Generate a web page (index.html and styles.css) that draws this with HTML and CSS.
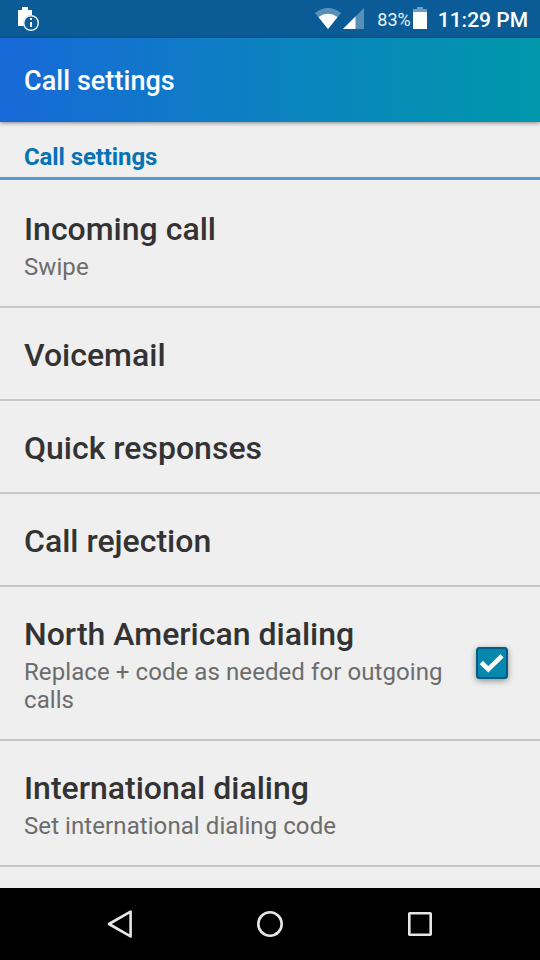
FILE: index.html
```
<!DOCTYPE html>
<html lang="en">
<head>
    <meta charset="UTF-8">
    <title>Call settings</title>
    <link rel="stylesheet" href="styles.css">
</head>
<body>

    <div class="status-bar">
        <svg class="notification" width="22" height="26" viewBox="0 0 22 26">
            <path d="M0 3h4V0h6v3h4v5a8 8 0 0 0-8 11H0z" fill="#fff"/>
            <circle cx="13" cy="16" r="7.3" fill="#0c5c98" stroke="#e8f1f7" stroke-width="1.5"/>
            <path d="M12 11h2v2h-2zM12 15h2v5h-2z" fill="#fff"/>
        </svg>
        <div class="status-icons">
            <svg class="wifi" width="26" height="22" viewBox="0 0 26 22">
                <path d="M0 5Q13-5 26 5L13 21z" fill="#5990b8"/>
                <path d="M3.4 9Q13 2.6 22.6 9L13 21z" fill="#fff"/>
            </svg>
            <svg class="signal" width="21" height="21" viewBox="0 0 21 21">
                <path d="M21 0v21H0z" fill="#5990b8"/>
                <path d="M12.5 8.5V21H0z" fill="#fff"/>
            </svg>
            <span class="percent">83%</span>
            <svg class="battery" width="14" height="22" viewBox="0 0 14 22">
                <path d="M0 2h4V0h6v2h4v4H0z" fill="#6d9dc0"/>
                <path d="M0 5h14v17H0z" fill="#fff"/>
            </svg>
            <span class="clock">11:29 PM</span>
        </div>
    </div>

    <header>
        <h1>Call settings</h1>
    </header>

    <main>
        <h2>Call settings</h2>
        <ul class="settings">
            <li class="setting first">
                <div class="setting-text">
                    <h3>Incoming call</h3>
                    <p>Swipe</p>
                </div>
            </li>
            <li class="setting">
                <div class="setting-text"><h3>Voicemail</h3></div>
            </li>
            <li class="setting">
                <div class="setting-text"><h3>Quick responses</h3></div>
            </li>
            <li class="setting">
                <div class="setting-text"><h3>Call rejection</h3></div>
            </li>
            <li class="setting">
                <div class="setting-text">
                    <h3>North American dialing</h3>
                    <p>Replace + code as needed for outgoing calls</p>
                </div>
                <div class="checkbox">
                    <svg width="32" height="32" viewBox="0 0 32 32">
                        <path d="M5.3 15.5l7 6.8L26 8.8" fill="none" stroke="#fff" stroke-width="4.6"/>
                    </svg>
                </div>
            </li>
            <li class="setting">
                <div class="setting-text">
                    <h3>International dialing</h3>
                    <p>Set international dialing code</p>
                </div>
            </li>
        </ul>
    </main>

    <nav>
        <svg width="30" height="30" viewBox="0 0 30 30">
            <path d="M25.6 2.6v24.8L4 15z"/>
        </svg>
        <svg width="30" height="30" viewBox="0 0 30 30">
            <circle cx="15" cy="15" r="11.7"/>
        </svg>
        <svg width="30" height="30" viewBox="0 0 30 30">
            <rect x="4.3" y="4.3" width="21.4" height="21.4" rx="0.5"/>
        </svg>
    </nav>

</body>
</html>
```
FILE: styles.css
```
body {
    margin: 0;
    height: 960px;
    display: flex;
    flex-direction: column;
    overflow: hidden;
    background: #efefef;
    color: #333;
    font-family: Roboto, sans-serif;
}
h1, h2, h3, p, ul {
    margin: 0;
    padding: 0;
}
svg {
    display: block;
    flex: none;
}
.status-bar {
    display: flex;
    justify-content: space-between;
    height: 38px;
    flex: none;
    padding: 0 12px 0 18px;
    background: #0b5b97;
    color: #fff;
}
.notification {
    margin-top: 7px;
}
.status-icons {
    display: flex;
}
.wifi {
    margin-top: 8px;
}
.signal {
    margin: 8px 13px 0 2px;
}
.percent {
    font-size: 18px;
    line-height: 40px;
    margin-right: 2px;
    color: #e9f2f8;
}
.battery {
    margin: 7px 11px 0 0;
}
.clock {
    font-size: 21px;
    font-weight: 500;
    line-height: 40px;
}
header {
    display: flex;
    align-items: center;
    height: 82px;
    flex: none;
    padding: 2px 24px 0;
    background: linear-gradient(to right, #1869d8, #0a84be 55%, #0097ab);
    box-shadow: 0 1px 4px rgba(0, 0, 0, 0.45);
}
h1 {
    font-size: 27px;
    font-weight: 500;
    line-height: 32px;
    letter-spacing: 0.05px;
    color: #fff;
}
main {
    flex: 1;
    min-height: 0;
}
h2 {
    height: 34px;
    padding: 21px 24px 0;
    border-bottom: 3px solid #559bd9;
    font-size: 24px;
    font-weight: 700;
    line-height: 28px;
    letter-spacing: -0.1px;
    color: #0673b5;
}
.settings {
    list-style: none;
}
.setting {
    display: flex;
    align-items: center;
    justify-content: space-between;
    padding: 28px 32px 25px 24px;
    border-bottom: 2px solid #c8c8c8;
}
.setting.first {
    padding-top: 30px;
}
.setting-text {
    max-width: 428px;
}
h3 {
    font-size: 32px;
    font-weight: 500;
    line-height: 38px;
}
.setting p {
    margin-top: 5px;
    font-size: 24px;
    line-height: 28px;
    letter-spacing: 0.08px;
    color: #6c6c6c;
}
.checkbox {
    width: 32px;
    height: 32px;
    flex: none;
    margin-bottom: 4px;
    border-radius: 4px;
    background: #0588ac;
    box-shadow: inset 0 0 0 2px #065a86, 0 2px 6px rgba(0, 0, 0, 0.4);
}
nav {
    display: flex;
    justify-content: center;
    align-items: center;
    gap: 120px;
    height: 72px;
    flex: none;
    background: #000;
}
nav svg {
    fill: none;
    stroke: #e6e6e6;
    stroke-width: 2.6;
    stroke-linejoin: round;
}
```
